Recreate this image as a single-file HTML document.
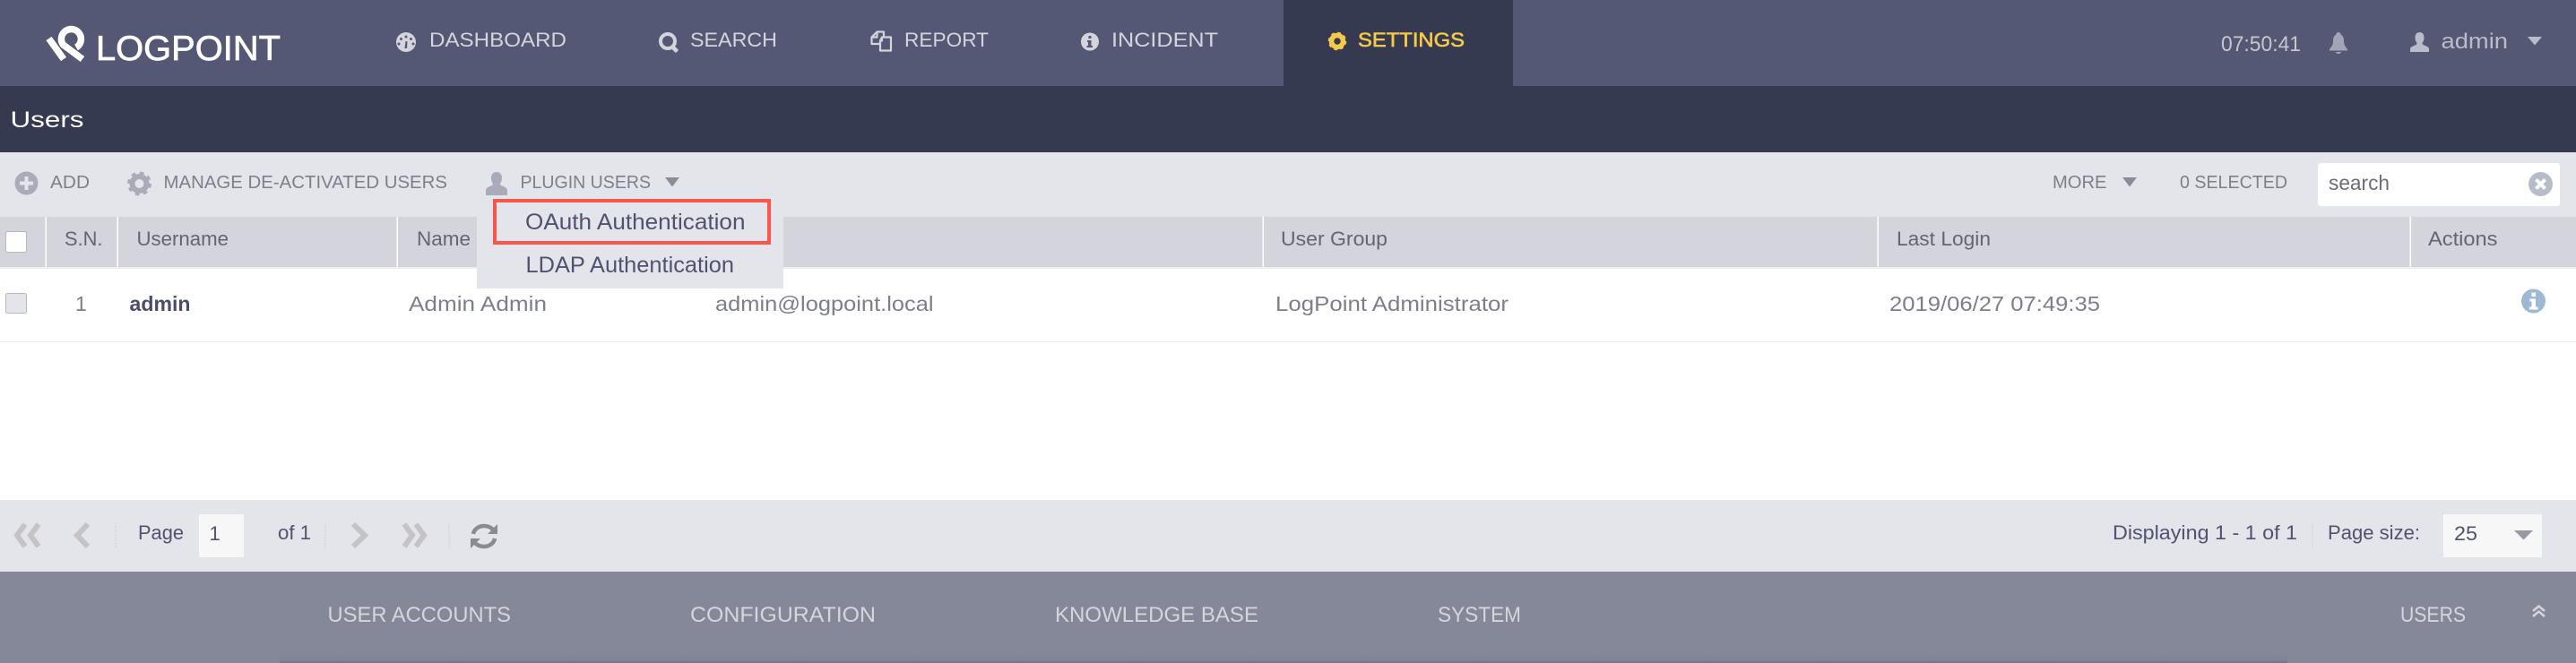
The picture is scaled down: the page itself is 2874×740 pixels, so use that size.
<!DOCTYPE html>
<html lang="en">
<head>
<meta charset="utf-8">
<title>Users</title>
<style>
html,body{margin:0;padding:0;width:2874px;height:740px;overflow:hidden;background:#fff}
svg{display:block}
text{font-family:"Liberation Sans",sans-serif;white-space:pre}
.nav{font-size:22.500px;fill:#d3d4dc}
.tb{font-size:20px;fill:#7e7f8c}
.th{font-size:22px;fill:#66656f}
.td{font-size:23px;fill:#7d7e8c}
.dd{font-size:25px;fill:#50536f}
.pg{font-size:22px;fill:#50536f}
.ft{font-size:24px;fill:#d5d6dc}
</style>
</head>
<body>
<svg xmlns="http://www.w3.org/2000/svg" width="2874" height="740" viewBox="0 0 2874 740">
<defs>
<linearGradient id="fg" x1="0" y1="0" x2="0" y2="1"><stop offset="0" stop-color="#858899" stop-opacity="0"/><stop offset="1" stop-color="#6f7286"/></linearGradient>
</defs>

<!-- bands -->
<rect x="0" y="0" width="2874" height="96" fill="#555874"/>
<rect x="1432" y="0" width="256" height="96" fill="#363a50"/>
<rect x="0" y="96" width="2874" height="74" fill="#363a50"/>
<rect x="0" y="170" width="2874" height="72" fill="#e4e5ea"/>
<rect x="0" y="242" width="2874" height="56" fill="#d3d4dc"/>
<rect x="0" y="298" width="2874" height="2" fill="#eeeef1"/>
<rect x="0" y="381" width="2874" height="1" fill="#eeeef1"/>
<rect x="0" y="558" width="2874" height="80" fill="#e4e5ea"/>
<rect x="0" y="638" width="2874" height="102" fill="#858899"/>
<rect x="312" y="724" width="2240" height="16" fill="url(#fg)" opacity=".35"/>
<rect x="312" y="738.500" width="2240" height="1.500" fill="#70738a"/>

<!-- logo -->
<g fill="none" stroke="#fff">
<path d="M54.500 43 L71 66" stroke-width="7.500"/>
<path d="M92 66 L70.500 50 A11 11 0 1 1 85 53" stroke-width="7.500"/>
</g>
<text x="107" y="67" font-size="39" fill="#fff" stroke="#fff" stroke-width=".7" textLength="206" lengthAdjust="spacingAndGlyphs">LOGPOINT</text>

<!-- nav -->
<g fill="#d3d4dc">
<circle cx="453" cy="47" r="11"/>
<g fill="#555874"><circle cx="447.500" cy="43.500" r="1.500"/><circle cx="453" cy="41" r="1.500"/><circle cx="458.500" cy="43.500" r="1.500"/><circle cx="445" cy="49" r="1.500"/><circle cx="461" cy="49" r="1.500"/><path d="M451.500 54l1-8 2 .3-.5 7.700z"/></g>
</g>
<text class="nav" x="479" y="52" textLength="153" lengthAdjust="spacingAndGlyphs">DASHBOARD</text>
<g fill="none" stroke="#d3d4dc"><circle cx="745" cy="46" r="8" stroke-width="4"/><path d="M750 52l5.500 5.500" stroke-width="4.500"/></g>
<text class="nav" x="770" y="52" textLength="97" lengthAdjust="spacingAndGlyphs">SEARCH</text>
<g fill="none" stroke="#d3d4dc" stroke-width="2.200" stroke-linejoin="round"><path d="M982 49h-9.500v-7.500l6-6h7.500v6"/><path d="M984 41.500h10v15h-12v-11z"/><path d="M978.500 36v5.500h-6"/><path d="M984 42v3.500h-2"/></g>
<text class="nav" x="1009" y="52" textLength="94" lengthAdjust="spacingAndGlyphs">REPORT</text>
<circle cx="1216" cy="46.500" r="10" fill="#d3d4dc"/>
<path d="M1214.500 40h3v3h-3zM1213 45h4.500v6h1.500v2h-6.500v-2h1.500v-4h-1z" fill="#555874"/>
<text class="nav" x="1240" y="52" textLength="119" lengthAdjust="spacingAndGlyphs">INCIDENT</text>
<circle cx="1492" cy="46" r="6.500" fill="none" stroke="#f5c94a" stroke-width="5.500"/>
<circle cx="1492" cy="46" r="8.500" fill="none" stroke="#f5c94a" stroke-width="3.500" stroke-dasharray="3.400 3.270"/>
<text x="1515" y="52" font-size="22.500" fill="#f5c94a" stroke="#f5c94a" stroke-width=".6" textLength="119" lengthAdjust="spacingAndGlyphs">SETTINGS</text>

<text x="2478" y="57" font-size="24" fill="#c6c6cc" textLength="89" lengthAdjust="spacingAndGlyphs">07:50:41</text>
<path d="M2609 36c1.500 0 2.500 1 2.500 2.500 3 1.500 3.500 4 3.500 7.500 0 4 1.500 6 4 9v1.500h-20V55c2.500-3 4-5 4-9 0-3.500.5-6 3.500-7.500 0-1.500 1-2.500 2.500-2.500zM2606 58h6c0 1-1.300 2-3 2s-3-1-3-2z" fill="#a2a5b8"/>
<path d="M2699.500 36c3.500 0 5 2.500 5 6 0 2.500-.8 4.500-2 6 0 1.500 1 2 3 3 3 1 4.500 2 4.500 4v3h-21v-3c0-2 1.500-3 4.500-4 2-1 3-1.500 3-3-1.200-1.500-2-3.500-2-6 0-3.500 1.500-6 5-6z" fill="#b9bcc9"/>
<text x="2723.500" y="54" font-size="24" fill="#b9bcc9" textLength="74.500" lengthAdjust="spacingAndGlyphs">admin</text>
<path d="M2820 41h16l-8 9.500z" fill="#b9bcc9"/>

<!-- title -->
<text x="11.500" y="142" font-size="25" fill="#fff" textLength="82" lengthAdjust="spacingAndGlyphs">Users</text>

<!-- toolbar -->
<circle cx="29.500" cy="204.500" r="13" fill="#a9acb8"/>
<path d="M27.500 197h4v5.500h5.500v4h-5.500v5.500h-4v-5.500h-5.500v-4h5.500z" fill="#e4e5ea"/>
<text class="tb" x="56" y="210" textLength="44" lengthAdjust="spacingAndGlyphs">ADD</text>
<circle cx="155.500" cy="205" r="8" fill="none" stroke="#a9acb8" stroke-width="6"/>
<circle cx="155.500" cy="205" r="11.500" fill="none" stroke="#a9acb8" stroke-width="4" stroke-dasharray="4.500 4.530"/>
<text class="tb" x="182.500" y="210" textLength="316.500" lengthAdjust="spacingAndGlyphs">MANAGE DE-ACTIVATED USERS</text>
<path d="M554 192c4 0 6 3 6 6.500 0 3-.8 5-2 6.500 0 1.500 1 2 3.500 3 3 1.200 4.500 2.500 4.500 5v5h-24v-5c0-2.500 1.500-3.800 4.500-5 2.500-1 3.500-1.500 3.500-3-1.200-1.500-2-3.500-2-6.500 0-3.500 2-6.500 6-6.500z" fill="#a9acb8"/>
<text class="tb" x="580.500" y="210" textLength="145.500" lengthAdjust="spacingAndGlyphs">PLUGIN USERS</text>
<path d="M742 198h16l-8 10.500z" fill="#8b8c98"/>
<text class="tb" x="2290" y="210" textLength="60.500" lengthAdjust="spacingAndGlyphs">MORE</text>
<path d="M2368 198h16l-8 10.500z" fill="#8b8c98"/>
<text class="tb" x="2432" y="210" textLength="120" lengthAdjust="spacingAndGlyphs">0 SELECTED</text>
<rect x="2586" y="182" width="270" height="48" rx="3" fill="#fff"/>
<text x="2598" y="212" font-size="23" fill="#6e6b7a" textLength="68" lengthAdjust="spacingAndGlyphs">search</text>
<circle cx="2834.500" cy="205.500" r="13.500" fill="#b7bcc9"/>
<path d="M2829.500 200.500l10 10M2839.500 200.500l-10 10" stroke="#fff" stroke-width="4"/>

<!-- table header -->
<g fill="#fff">
<rect x="50.500" y="242" width="1.500" height="56"/><rect x="130.500" y="242" width="1.500" height="56"/><rect x="442.500" y="242" width="1.500" height="56"/>
<rect x="1408.500" y="242" width="1.500" height="56"/><rect x="2094.500" y="242" width="1.500" height="56"/><rect x="2688.500" y="242" width="1.500" height="56"/>
</g>
<rect x="6.500" y="258.500" width="23" height="23" rx="2" fill="#fff" stroke="#b5b6be"/>
<text class="th" x="72" y="274" textLength="42.500" lengthAdjust="spacingAndGlyphs">S.N.</text>
<text class="th" x="152.500" y="274" textLength="102.500" lengthAdjust="spacingAndGlyphs">Username</text>
<text class="th" x="465" y="274" textLength="60" lengthAdjust="spacingAndGlyphs">Name</text>
<text class="th" x="1429" y="274" textLength="119" lengthAdjust="spacingAndGlyphs">User Group</text>
<text class="th" x="2116" y="274" textLength="105" lengthAdjust="spacingAndGlyphs">Last Login</text>
<text class="th" x="2709" y="274" textLength="77.500" lengthAdjust="spacingAndGlyphs">Actions</text>

<!-- row -->
<rect x="6.500" y="327.500" width="23" height="22" rx="2" fill="#e4e5ea" stroke="#b5b6be"/>
<text class="td" x="84" y="347">1</text>
<text x="144.500" y="347" font-size="23" font-weight="bold" fill="#4a4d6a" textLength="68" lengthAdjust="spacingAndGlyphs">admin</text>
<text class="td" x="456" y="347" textLength="154" lengthAdjust="spacingAndGlyphs">Admin Admin</text>
<text class="td" x="798" y="347" textLength="243.500" lengthAdjust="spacingAndGlyphs">admin@logpoint.local</text>
<text class="td" x="1423" y="347" textLength="260" lengthAdjust="spacingAndGlyphs">LogPoint Administrator</text>
<text class="td" x="2108" y="347" textLength="235" lengthAdjust="spacingAndGlyphs">2019/06/27 07:49:35</text>
<circle cx="2826.500" cy="336" r="13.500" fill="#9fb8d4"/>
<path d="M2824.500 326.500h4.500v4.500h-4.500zM2822.500 333.500h6.500v9h2.500v3h-9.500v-3h2.500v-6h-2z" fill="#fff"/>

<!-- dropdown -->
<rect x="532" y="222" width="342" height="100" fill="#e4e5ea"/>
<rect x="552" y="224" width="306" height="47" fill="none" stroke="#f9564c" stroke-width="4"/>
<text class="dd" x="586" y="256" textLength="245.500" lengthAdjust="spacingAndGlyphs">OAuth Authentication</text>
<text class="dd" x="586.500" y="304" textLength="232.500" lengthAdjust="spacingAndGlyphs">LDAP Authentication</text>

<!-- pagination -->
<g fill="none" stroke="#c4c3c8" stroke-width="6">
<path d="M28 585l-9 12.500 9 12.500M43 585l-9 12.500 9 12.500"/>
<path d="M98 585l-12 12.500 12 12.500"/>
<path d="M394 585l13 12.500-13 12.500"/>
<path d="M451 585l9 12.500-9 12.500M464 585l9 12.500-9 12.500"/>
</g>
<g stroke="#cfd0d6" stroke-width="1" stroke-dasharray="2 1">
<path d="M129 584v28M363 584v28M501 584v28M2580 584v28"/>
</g>
<text class="pg" x="154" y="602" textLength="51" lengthAdjust="spacingAndGlyphs">Page</text>
<rect x="222" y="574" width="50" height="48" rx="1" fill="#f7f7f8"/>
<text class="pg" x="233.500" y="603">1</text>
<text class="pg" x="310" y="602" textLength="37" lengthAdjust="spacingAndGlyphs">of 1</text>
<g fill="none" stroke="#8a8a94" stroke-width="4.500">
<path d="M528 596c1-6 7-9 12-9 4 0 8 1.500 11 5"/>
<path d="M552 601c-1 6-7 9-12 9-4 0-8-1.500-11-5"/>
</g>
<path d="M555 585v11h-11zM525 612v-11h11z" fill="#8a8a94"/>
<text class="pg" x="2357" y="602" textLength="206" lengthAdjust="spacingAndGlyphs">Displaying 1 - 1 of 1</text>
<text class="pg" x="2597" y="602" textLength="103" lengthAdjust="spacingAndGlyphs">Page size:</text>
<rect x="2726" y="574" width="110" height="48" fill="#f7f7f8"/>
<text class="pg" x="2738" y="603" font-size="24" textLength="26" lengthAdjust="spacingAndGlyphs">25</text>
<path d="M2805 592h21l-10.500 10.500z" fill="#9a9aa0"/>

<!-- footer -->
<text class="ft" x="365.500" y="694" textLength="204.500" lengthAdjust="spacingAndGlyphs">USER ACCOUNTS</text>
<text class="ft" x="770" y="694" textLength="207" lengthAdjust="spacingAndGlyphs">CONFIGURATION</text>
<text class="ft" x="1177" y="694" textLength="227" lengthAdjust="spacingAndGlyphs">KNOWLEDGE BASE</text>
<text class="ft" x="1604" y="694" textLength="93" lengthAdjust="spacingAndGlyphs">SYSTEM</text>
<text class="ft" x="2678" y="694" textLength="73" lengthAdjust="spacingAndGlyphs">USERS</text>
<path d="M2826 682l6.500-5.500 6.500 5.500M2826 688l6.500-5.500 6.500 5.500" fill="none" stroke="#d5d6dc" stroke-width="2.500"/>
</svg>
</body>
</html>
